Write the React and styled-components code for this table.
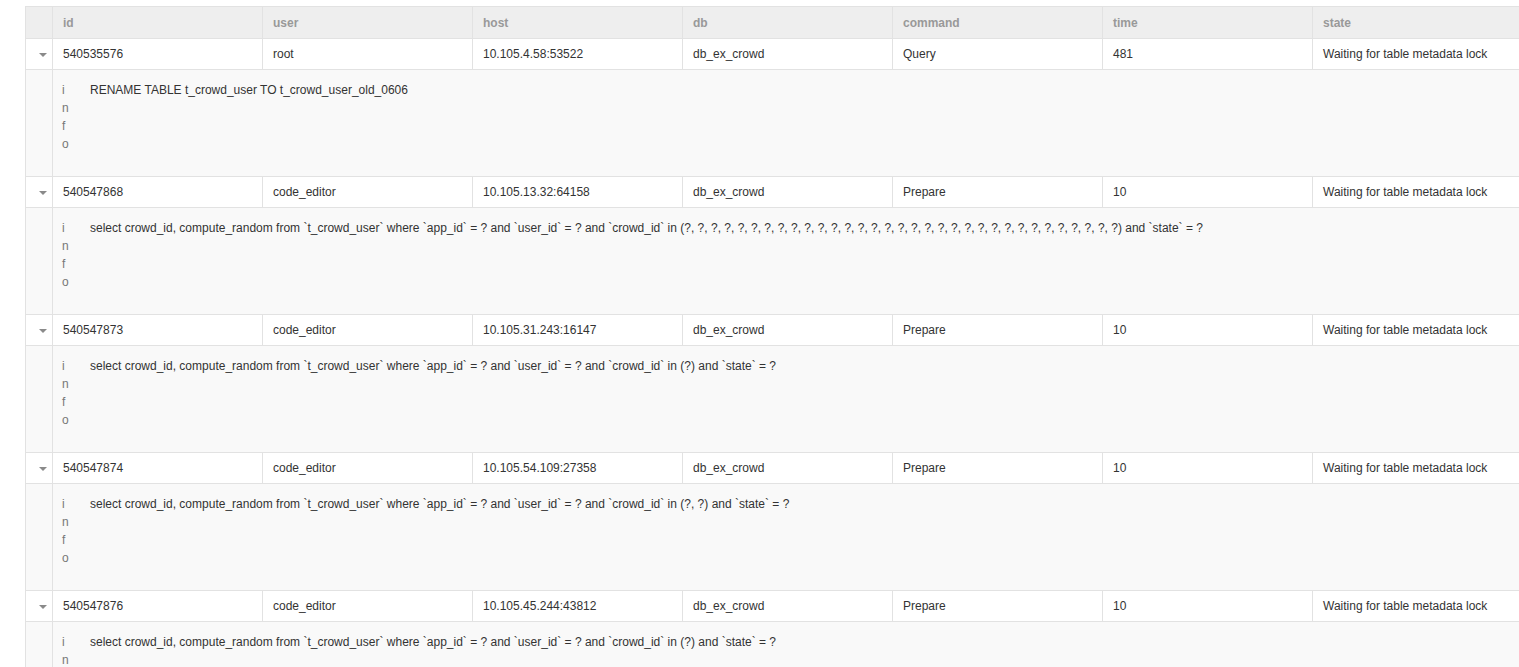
import React from 'react';
import styled, { createGlobalStyle } from 'styled-components';

const GlobalStyle = createGlobalStyle`
	html, body {
		margin: 0;
		padding: 0;
		background: #fff;
		overflow: hidden;
	}
	body {
		font-family: "Liberation Sans", Arial, sans-serif;
		font-size: 12px;
		color: #333;
	}
`;

const COLS = ['id', 'user', 'host', 'db', 'command', 'time', 'state'];

const rows = [
	{
		id: '540535576',
		user: 'root',
		host: '10.105.4.58:53522',
		db: 'db_ex_crowd',
		command: 'Query',
		time: '481',
		state: 'Waiting for table metadata lock',
		info: 'RENAME TABLE t_crowd_user TO t_crowd_user_old_0606',
	},
	{
		id: '540547868',
		user: 'code_editor',
		host: '10.105.13.32:64158',
		db: 'db_ex_crowd',
		command: 'Prepare',
		time: '10',
		state: 'Waiting for table metadata lock',
		info:
			'select crowd_id, compute_random from `t_crowd_user` where `app_id` = ? and `user_id` = ? and `crowd_id` in (' +
			Array(33).fill('?').join(', ') +
			') and `state` = ?',
	},
	{
		id: '540547873',
		user: 'code_editor',
		host: '10.105.31.243:16147',
		db: 'db_ex_crowd',
		command: 'Prepare',
		time: '10',
		state: 'Waiting for table metadata lock',
		info: 'select crowd_id, compute_random from `t_crowd_user` where `app_id` = ? and `user_id` = ? and `crowd_id` in (?) and `state` = ?',
	},
	{
		id: '540547874',
		user: 'code_editor',
		host: '10.105.54.109:27358',
		db: 'db_ex_crowd',
		command: 'Prepare',
		time: '10',
		state: 'Waiting for table metadata lock',
		info: 'select crowd_id, compute_random from `t_crowd_user` where `app_id` = ? and `user_id` = ? and `crowd_id` in (?, ?) and `state` = ?',
	},
	{
		id: '540547876',
		user: 'code_editor',
		host: '10.105.45.244:43812',
		db: 'db_ex_crowd',
		command: 'Prepare',
		time: '10',
		state: 'Waiting for table metadata lock',
		info: 'select crowd_id, compute_random from `t_crowd_user` where `app_id` = ? and `user_id` = ? and `crowd_id` in (?) and `state` = ?',
	},
];

const Page = styled.div`
	padding: 6px 0 0 25px;
`;
const Table = styled.div`
	width: 1498px;
	border-top: 1px solid #e2e2e2;
	border-left: 1px solid #e2e2e2;
`;
const Row = styled.div`
	display: grid;
	grid-template-columns: 27px repeat(7, 210px);
	height: ${(p) => (p.$head ? 31 : 30)}px;
	border-bottom: 1px solid #e2e2e2;
	background: ${(p) => (p.$head ? '#eeeeee' : '#fff')};
`;
const Cell = styled.div`
	display: flex;
	align-items: center;
	padding: 0 10px;
	border-right: 1px solid #e2e2e2;
	white-space: nowrap;
	overflow: hidden;
	font-weight: ${(p) => (p.$head ? 'bold' : 'normal')};
	color: ${(p) => (p.$head ? '#999' : '#333')};
`;
const Expander = styled.div`
	display: flex;
	align-items: center;
	justify-content: center;
	padding-left: 8px;
	border-right: 1px solid #e2e2e2;
`;
const Caret = styled.span`
	width: 0;
	height: 0;
	border-left: 4px solid transparent;
	border-right: 4px solid transparent;
	border-top: 4px solid #8a8a8a;
	margin-top: 1px;
`;
const Detail = styled.div`
	display: grid;
	grid-template-columns: 27px 1fr;
	height: 106px;
	border-bottom: 1px solid #e2e2e2;
	background: #f9f9f9;
`;
const Gutter = styled.div`
	border-right: 1px solid #e2e2e2;
`;
const DetailBody = styled.div`
	display: flex;
	padding: 11px 0 0 9px;
	line-height: 18px;
`;
const Label = styled.div`
	width: 28px;
	flex: none;
	color: #777;
	display: flex;
	flex-direction: column;
`;
const InfoText = styled.div`
	color: #333;
	white-space: nowrap;
`;

const ProcessRow = ({ data }) => (
	<>
		<Row>
			<Expander>
				<Caret />
			</Expander>
			{COLS.map((c) => (
				<Cell key={c}>{data[c]}</Cell>
			))}
		</Row>
		<Detail>
			<Gutter />
			<DetailBody>
				<Label>
					{'info'.split('').map((ch) => (
						<span key={ch}>{ch}</span>
					))}
				</Label>
				<InfoText>{data.info}</InfoText>
			</DetailBody>
		</Detail>
	</>
);

const App = () => (
	<Page>
		<GlobalStyle />
		<Table>
			<Row $head>
				<Expander />
				{COLS.map((c) => (
					<Cell key={c} $head>
						{c}
					</Cell>
				))}
			</Row>
			{rows.map((r) => (
				<ProcessRow key={r.id} data={r} />
			))}
		</Table>
	</Page>
);

export default App;
